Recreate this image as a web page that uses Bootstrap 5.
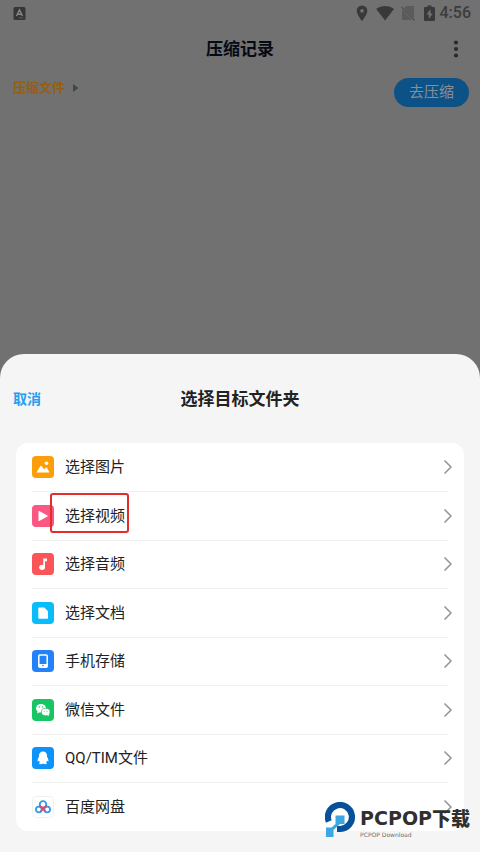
<!DOCTYPE html>
<html lang="zh-CN">
<head>
<meta charset="utf-8">
<meta name="viewport" content="width=device-width, initial-scale=1">
<title>压缩记录</title>
<link href="https://cdn.jsdelivr.net/npm/bootstrap@5.3.0/dist/css/bootstrap.min.css" rel="stylesheet">
<style>
body{background:#717171;color:#222;font-family:Roboto,"Noto Sans CJK SC",sans-serif;font-size:15px;line-height:24px}
svg{display:block;flex:none}
.status-bar{height:26px;padding:0 9px 0 13px;color:#393939}
.clock{font-size:16px;line-height:26px;font-weight:500;color:#3c3c3c}
.title-bar{height:46px;padding:0 12px}
.page-title{font-size:17px;line-height:24px;font-weight:700;color:#060a14}
.menu-btn{width:24px;height:32px;color:#2b2b2b}
.tool-row{padding:6px 11px 0 13px}
.crumb{font-size:13px;line-height:20px;font-weight:700;color:#945f13;text-decoration:none}
.go-btn{width:75px;height:29px;background:#0d5287;color:#848f98;font-size:15px;line-height:27px}
.sheet{background:#f5f5f5;border-radius:24px 24px 0 0;padding:0 16px 21px}
.sheet-head{height:89px}
.cancel{color:#2a9cec;font-size:14px;line-height:24px;font-weight:700;margin-left:-3px}
.sheet-title{font-size:17px;line-height:24px;font-weight:700}
.source-list{--bs-list-group-border-radius:12px;background:#fff;border-radius:12px}
.source{height:48px;padding:0 11px 0 16px;color:#222;border:0;background:none}
.source:nth-child(even){height:49px}
.source+.source::before{content:"";position:absolute;top:0;left:16px;right:16px;border-top:1px solid #f1f1f1}
.source svg:first-child{margin-right:11px}
.highlight{position:absolute;left:34px;top:2px;width:79px;height:40px;border:2px solid #e12d2d;border-radius:3px}
.watermark{right:10px;bottom:14px;color:#303030;pointer-events:none}
.brand{font:700 19px/20px "DejaVu Sans",sans-serif}
.brand-cn{font:900 19px/20px "Noto Sans CJK SC",sans-serif}
.brand-sub{font:6px/6px "DejaVu Sans",sans-serif;color:#6c6c6c}
</style>
<script src="https://cdn.jsdelivr.net/npm/bootstrap@5.3.0/dist/js/bootstrap.bundle.min.js"></script>
</head>
<body>
<svg width="0" height="0" class="position-absolute" aria-hidden="true"><defs>
<symbol id="chev" viewBox="0 0 10 16"><path d="M1.500 1.500 8 8l-6.500 6.500" fill="none" stroke="#949494" stroke-width="1.500"/></symbol>
</defs></svg>
<div class="d-flex flex-column min-vh-100 position-relative">
<main class="flex-grow-1">
  <div class="status-bar d-flex align-items-center justify-content-between">
    <svg width="13" height="13" viewBox="0 0 13 13"><rect width="12" height="13" x=".5" rx="1.500" fill="#363636"/><path d="M3.500 9 6.500 3l3 6M4.500 7.300h4" fill="none" stroke="#858585" stroke-width="1.500"/><path d="M6 10.800h4" stroke="#606060"/></svg>
    <div class="d-flex align-items-center">
      <svg width="84" height="18" viewBox="1 0 84 18" fill="currentColor" class="me-1">
        <path fill-rule="evenodd" d="M11 1.500a5.300 5.300 0 0 0-5.300 5.300C5.700 10.800 11 17 11 17s5.300-6.200 5.300-10.200A5.300 5.300 0 0 0 11 1.500Zm0 3.400a1.900 1.900 0 1 1 0 3.800 1.900 1.900 0 0 1 0-3.800Z"/>
        <path d="M25.200 5.100c5.200-4.200 12.600-4.200 17.800 0L34.100 16.500Z"/>
        <path d="M55 2h8v12.500L53 4ZM51 5.500 61 16H51Z" fill="#5b5b5b"/><path d="m50.500 3 13 13.500" stroke="#505050" stroke-width="1.200"/>
        <path fill-rule="evenodd" d="M76.500 1.500h4V3H83a1 1 0 0 1 1 1v12a1 1 0 0 1-1 1h-9a1 1 0 0 1-1-1V4a1 1 0 0 1 1-1h2.500ZM79.500 5l-4 5.500h2.300V15l4-5.500h-2.300Z"/>
      </svg>
      <span class="clock">4:56</span>
    </div>
  </div>
  <header class="title-bar d-flex align-items-center justify-content-between">
    <span class="menu-btn"></span>
    <h1 class="page-title m-0">压缩记录</h1>
    <button type="button" class="menu-btn btn p-0 border-0 d-flex align-items-center justify-content-center" aria-label="更多"><svg width="6" height="18" viewBox="0 0 6 18" fill="currentColor"><circle cx="3" cy="2.500" r="2.100"/><circle cx="3" cy="9" r="2.100"/><circle cx="3" cy="15.500" r="2.100"/></svg></button>
  </header>
  <div class="tool-row d-flex align-items-start justify-content-between">
    <a href="#" class="crumb d-flex align-items-center">压缩文件<svg width="6" height="8" viewBox="0 0 6 8" class="ms-2"><path d="m0 0 5.500 4L0 8Z" fill="#464646"/></svg></a>
    <button type="button" class="go-btn btn rounded-pill border-0 p-0">去压缩</button>
  </div>
</main>
<section class="sheet" aria-labelledby="sheetTitle">
  <div class="sheet-head row align-items-center gx-0">
    <div class="col"><button type="button" class="cancel btn btn-link p-0 border-0 text-decoration-none">取消</button></div>
    <h2 id="sheetTitle" class="sheet-title col-auto m-0">选择目标文件夹</h2>
    <div class="col"></div>
  </div>
  <div class="source-list list-group">
    <button type="button" class="source list-group-item list-group-item-action d-flex align-items-center"><svg width="22" height="22" viewBox="0 0 22 22"><rect width="22" height="22" rx="4" fill="#fc9e0a"/><path d="m4.500 16.500 3.700-6.200q.8-1 1.600 0l2.200 3.200 1.500-1.700q.8-.8 1.500 0l2.500 4.700Z" fill="#fff"/><circle cx="14.500" cy="7.300" r="1.800" fill="#fff"/></svg><span class="me-auto">选择图片</span><svg width="10" height="16"><use href="#chev"/></svg></button>
    <button type="button" class="source list-group-item list-group-item-action d-flex align-items-center"><svg width="22" height="22" viewBox="0 0 22 22"><rect width="22" height="22" rx="4" fill="#fa5783"/><path d="M6.500 6.500v9q0 .8.700.4l8.300-4.500q.6-.4 0-.8L7.200 6.100q-.7-.4-.7.400Z" fill="#fff"/></svg><span class="me-auto">选择视频</span><span class="highlight"></span><svg width="10" height="16"><use href="#chev"/></svg></button>
    <button type="button" class="source list-group-item list-group-item-action d-flex align-items-center"><svg width="22" height="22" viewBox="0 0 22 22"><rect width="22" height="22" rx="4" fill="#fb5558"/><path d="M11.300 14.500V5.500H15v2.700h-2V14.500Z" fill="#fff"/><ellipse cx="10.100" cy="14.300" rx="2.900" ry="2.600" fill="#fff"/></svg><span class="me-auto">选择音频</span><svg width="10" height="16"><use href="#chev"/></svg></button>
    <button type="button" class="source list-group-item list-group-item-action d-flex align-items-center"><svg width="22" height="22" viewBox="0 0 22 22"><rect width="22" height="22" rx="4" fill="#0bbcfa"/><path d="M7 5.500h5.300l3.700 3.700V16q0 .7-.7.700H7q-.7 0-.7-.7V6.200q0-.7.700-.7Z" fill="#fff"/></svg><span class="me-auto">选择文档</span><svg width="10" height="16"><use href="#chev"/></svg></button>
    <button type="button" class="source list-group-item list-group-item-action d-flex align-items-center"><svg width="22" height="22" viewBox="0 0 22 22"><rect width="22" height="22" rx="4" fill="#2382f8"/><rect x="6.800" y="5" width="8.400" height="12.300" rx="1" fill="none" stroke="#fff" stroke-width="1.500"/><path d="M7 14h8v3H7Z" fill="#fff"/><circle cx="11" cy="15.600" r=".8" fill="#2382f8"/></svg><span class="me-auto">手机存储</span><svg width="10" height="16"><use href="#chev"/></svg></button>
    <button type="button" class="source list-group-item list-group-item-action d-flex align-items-center"><svg width="22" height="22" viewBox="0 0 22 22"><rect width="22" height="22" rx="4" fill="#18c564"/><ellipse cx="9" cy="9.300" rx="5" ry="4.300" fill="#fff"/><path d="m5.500 12-.3 2.500 2.800-1.500Z" fill="#fff"/><ellipse cx="13.700" cy="13" rx="4.300" ry="3.700" fill="#fff" stroke="#18c564" stroke-width=".7"/><path d="m15 16 2 1-.3-2Z" fill="#fff"/><g fill="#18c564"><circle cx="7.300" cy="8" r=".7"/><circle cx="10.600" cy="8" r=".7"/><circle cx="12.300" cy="12.200" r=".5"/><circle cx="15" cy="12.200" r=".5"/></g></svg><span class="me-auto">微信文件</span><svg width="10" height="16"><use href="#chev"/></svg></button>
    <button type="button" class="source list-group-item list-group-item-action d-flex align-items-center"><svg width="22" height="22" viewBox="0 0 22 22"><rect width="22" height="22" rx="4" fill="#0c94fa"/><path d="M11 4.500c-2.600 0-4 1.900-4 4.300 0 1-.2 1.500-.7 2.300-.7 1.200-1 3-.5 3.300.3.200.8-.4 1.100-.8.200.8.500 1.300 1 1.800-.7.400-1 .8-.8 1.200.4.700 3 .7 3.900 0 .9.700 3.500.7 3.900 0 .2-.4-.1-.8-.8-1.200.5-.5.800-1 1-1.800.3.400.8 1 1.100.8.500-.3.200-2.100-.5-3.300-.5-.8-.7-1.300-.7-2.300 0-2.400-1.400-4.300-4-4.300Z" fill="#fff"/></svg><span class="me-auto">QQ/TIM文件</span><svg width="10" height="16"><use href="#chev"/></svg></button>
    <button type="button" class="source list-group-item list-group-item-action d-flex align-items-center"><svg width="22" height="22" viewBox="0 0 22 22"><rect x=".5" y=".5" width="21" height="21" rx="4" fill="#fff" stroke="#f1f1f1"/><g fill="none" stroke-width="1.800"><circle cx="11" cy="8.500" r="3.300" stroke="#2d9ce9"/><circle cx="6.800" cy="13.500" r="2.900" stroke="#2d9ce9"/><circle cx="15.200" cy="13.500" r="2.900" stroke="#2d9ce9"/><path d="M7.700 9.300Q8.300 11.500 11 11.800q2.700-.3 3.300-2.500M8.900 15.500 11 12l2.100 3.500" stroke="#e4476d"/></g></svg><span class="me-auto">百度网盘</span><svg width="10" height="16"><use href="#chev"/></svg></button>
  </div>
</section>
<div class="watermark position-absolute d-flex align-items-end">
  <svg width="31" height="36" viewBox="0 0 31 36"><path d="M3.800 19.500A12 12 0 1 1 15.500 27H12" fill="none" stroke="#07519a" stroke-width="6.200"/><path d="M10.500 13.500h9v8.500h-4.500L8.500 28v7H1V25.500h5.500l4-3.500Z" fill="#3ba6e2"/></svg>
  <div class="ms-1">
    <div class="d-flex align-items-center"><span class="brand">PCPOP</span><span class="brand-cn">下载</span></div>
    <div class="brand-sub mt-1">PCPOP Download</div>
  </div>
</div>
</div>
</body>
</html>
